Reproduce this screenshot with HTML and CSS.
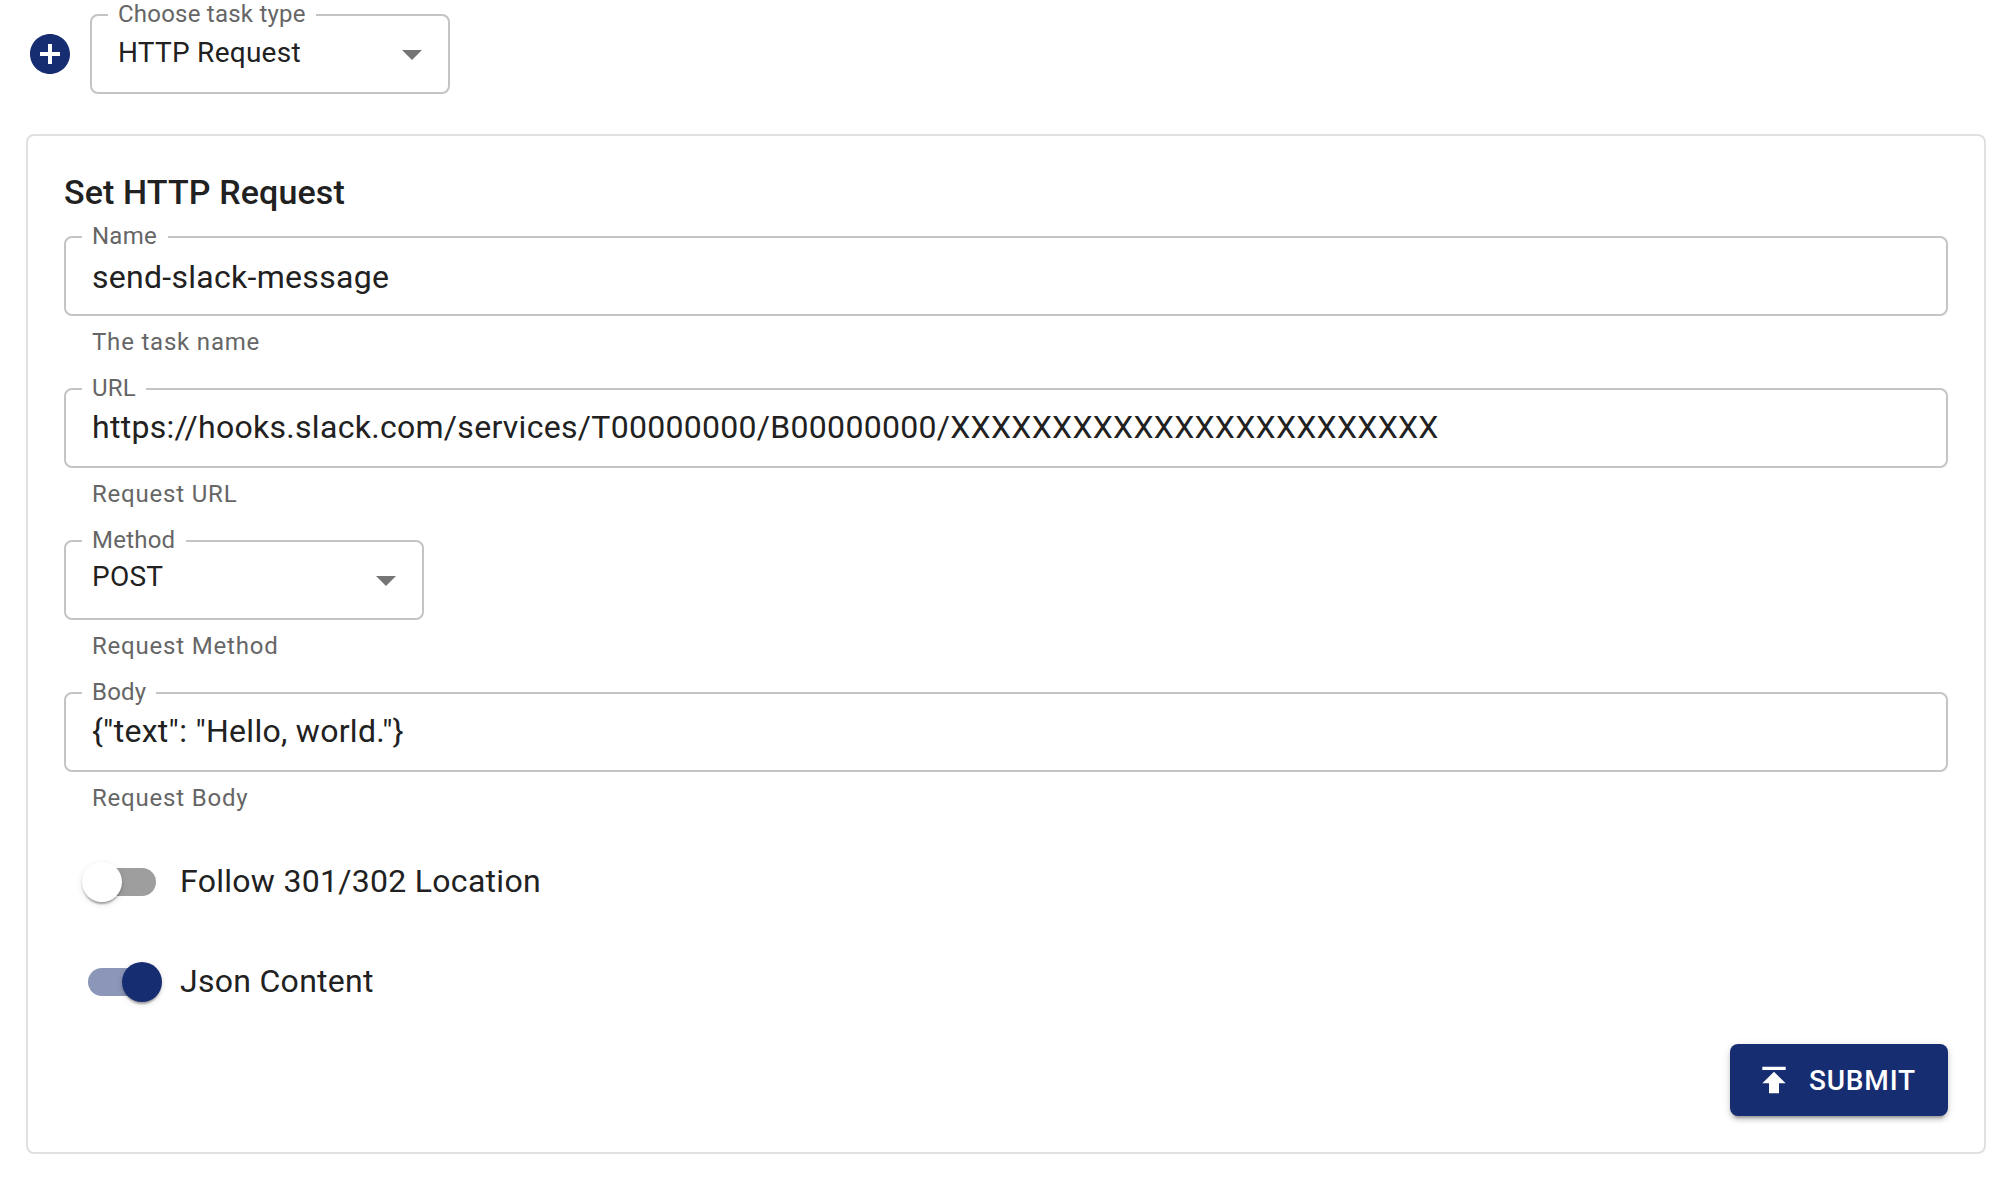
FILE: index.html
```html
<!DOCTYPE html>
<html lang="en">
<head>
<meta charset="utf-8">
<title>New task</title>
<link rel="stylesheet" href="styles.css">
</head>
<body>
<main class="page">
  <div class="toolbar">
    <svg class="add" viewBox="0 0 24 24"><path d="M12 2C6.48 2 2 6.48 2 12s4.48 10 10 10 10-4.48 10-10S17.52 2 12 2zm5 11h-4v4h-2v-4H7v-2h4V7h2v4h4v2z"/></svg>
    <div class="box select task-type">
      <span class="label">Choose task type</span>
      <span class="value">HTTP Request</span>
      <svg class="arrow" viewBox="0 0 24 24"><path d="M7 10l5 5 5-5z"/></svg>
    </div>
  </div>
  <section class="card">
    <h2 class="title">Set HTTP Request</h2>
    <div class="field">
      <div class="box name"><span class="label">Name</span><span class="value">send-slack-message</span></div>
      <p class="helper">The task name</p>
    </div>
    <div class="field">
      <div class="box url"><span class="label">URL</span><span class="value">https://hooks.slack.com/services/T00000000/B00000000/XXXXXXXXXXXXXXXXXXXXXXXX</span></div>
      <p class="helper">Request URL</p>
    </div>
    <div class="field">
      <div class="box select method">
        <span class="label">Method</span>
        <span class="value">POST</span>
        <svg class="arrow" viewBox="0 0 24 24"><path d="M7 10l5 5 5-5z"/></svg>
      </div>
      <p class="helper">Request Method</p>
    </div>
    <div class="field">
      <div class="box body"><span class="label">Body</span><span class="value">{"text": "Hello, world."}</span></div>
      <p class="helper">Request Body</p>
    </div>
    <div class="switch-row"><span class="switch"><span class="thumb"></span></span><span class="switch-label">Follow 301/302 Location</span></div>
    <div class="switch-row"><span class="switch on"><span class="thumb"></span></span><span class="switch-label">Json Content</span></div>
    <div class="actions">
      <button class="submit" type="button">
        <svg class="publish" viewBox="0 0 24 24"><path d="M5 4v2h14V4H5zm0 10h4v6h6v-6h4l-7-7-7 7z"/></svg>
        <span class="submit-label">SUBMIT</span>
      </button>
    </div>
  </section>
</main>
</body>
</html>
```
FILE: styles.css
```css
* { box-sizing: border-box; }
body {
  margin: 0;
  background: #fff;
  color: #212121;
  font-family: Roboto, "Liberation Sans", sans-serif;
  font-size: 32px;
  letter-spacing: 0.29px;
}
.page { padding: 14px 30px 34px 26px; }
.toolbar { display: flex; align-items: center; gap: 16px; height: 80px; margin-bottom: 40px; }
.add { width: 48px; height: 48px; fill: #172d71; }
.box {
  position: relative;
  display: flex;
  align-items: center;
  height: 80px;
  padding: 0 12px 0 26px;
  border: 2px solid #c4c4c4;
  border-radius: 8px;
}
.label {
  position: absolute;
  top: -16px;
  left: 16px;
  padding: 0 11px 0 10px;
  background: #fff;
  color: #666;
  font-size: 24px;
  line-height: 28px;
  letter-spacing: 0.225px;
  white-space: nowrap;
}
.task-type .label, .url .label, .body .label { padding-right: 10px; }
.value { line-height: 38px; white-space: nowrap; }
.select { justify-content: space-between; width: 360px; font-size: 28px; letter-spacing: 0.26px; }
.name .value { padding-top: 2px; }
.select .value { padding-bottom: 2px; }
.method .value { padding-bottom: 6px; }
.url .value { padding-bottom: 3px; }
.body .value { padding-bottom: 3px; }
.arrow { width: 48px; height: 48px; fill: #757575; }
.card {
  height: 1020px;
  padding: 36px;
  border: 2px solid #e0e0e0;
  border-radius: 8px;
}
.title { margin: 0 0 24px; font-size: 34px; line-height: 40px; font-weight: 500; letter-spacing: 0.13px; }
.field { height: 152px; }
.helper { margin: 12px 28px 0; color: #666; font-size: 24px; line-height: 28px; letter-spacing: 0.8px; }
.switch-row { display: flex; align-items: center; gap: 24px; height: 76px; padding-left: 24px; margin-bottom: 24px; }
.switch-label { padding-bottom: 2px; }
.switch { display: flex; align-items: center; width: 68px; height: 28px; border-radius: 14px; background: #9e9e9e; }
.thumb {
  flex: none;
  width: 40px;
  height: 40px;
  margin-left: -6px;
  border-radius: 50%;
  background: #fff;
  box-shadow: 0 4px 2px -2px rgba(0,0,0,.2), 0 2px 2px rgba(0,0,0,.14), 0 2px 6px rgba(0,0,0,.12);
}
.switch.on { background: #8b96b8; }
.on .thumb { margin-left: 34px; background: #172d71; }
.actions { display: flex; justify-content: flex-end; }
.submit {
  display: flex;
  align-items: center;
  gap: 15px;
  width: 218px;
  height: 72px;
  padding: 0 24px;
  border: 0;
  border-radius: 8px;
  background: #172d71;
  color: #fff;
  font: 500 28px/48px Roboto, "Liberation Sans", sans-serif;
  letter-spacing: 0.8px;
  box-shadow: 0 6px 2px -4px rgba(0,0,0,.2), 0 4px 4px rgba(0,0,0,.14), 0 2px 10px rgba(0,0,0,.12);
}
.submit-label { padding-top: 2px; }
.publish { width: 40px; height: 40px; fill: #fff; }
```
